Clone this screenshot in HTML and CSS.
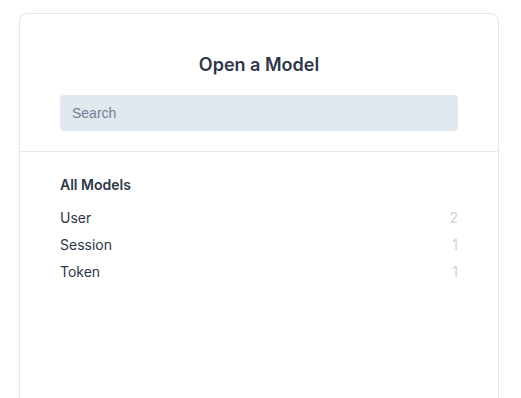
FILE: index.html
```html
<!DOCTYPE html>
<html lang="en">
<head>
    <meta charset="UTF-8">
    <meta name="viewport" content="width=device-width, initial-scale=1.0">
    <title>Open a Model</title>
    <link rel="stylesheet" href="styles.css">
</head>
<body>

    <!-- Model picker card -->
    <div class="picker">
        <div class="picker-head">
            <h2>Open a Model</h2>
            <input class="search" type="text" placeholder="Search">
        </div>

        <div class="picker-list">
            <h3>All Models</h3>
            <ul>
                <li><span>User</span><span class="count">2</span></li>
                <li><span>Session</span><span class="count">1</span></li>
                <li><span>Token</span><span class="count">1</span></li>
            </ul>
        </div>
    </div>

</body>
</html>
```

FILE: styles.css
```css
body {
    margin: 0;
    background: #fff;
    font-family: Inter, "Noto Sans", sans-serif;
    color: #2d3748;
}

.picker {
    box-sizing: border-box;
    width: 480px;
    height: 385px;
    margin: 13px 0 0 19px;
    border: 1px solid #e2e8f0;
    border-bottom: none;
    border-radius: 8px 8px 0 0;
    background: #fff;
}

.picker-head {
    padding: 37px 40px 20px;
    border-bottom: 1px solid #e2e8f0;
    text-align: center;
}

.picker-head h2 {
    margin: 0 0 16px;
    font-size: 18px;
    line-height: 28px;
    font-weight: 600;
    color: #2d3748;
}

.search {
    display: block;
    box-sizing: border-box;
    width: 100%;
    height: 36px;
    padding: 0 12px;
    border: none;
    border-radius: 4px;
    background: #e2e8f0;
    font-family: "Liberation Sans", Arial, sans-serif;
    font-size: 14px;
    color: #2d3748;
    outline: none;
}

.search::placeholder {
    color: #718096;
}

.picker-list {
    padding: 23px 40px;
}

.picker-list h3 {
    margin: 0 0 9px;
    font-size: 14px;
    line-height: 20px;
    font-weight: 600;
}

.picker-list ul {
    list-style: none;
    margin: 0;
    padding: 0;
}

.picker-list li {
    display: flex;
    justify-content: space-between;
    font-size: 14px;
    line-height: 27px;
}

.count {
    color: #cbd5e0;
}
```
